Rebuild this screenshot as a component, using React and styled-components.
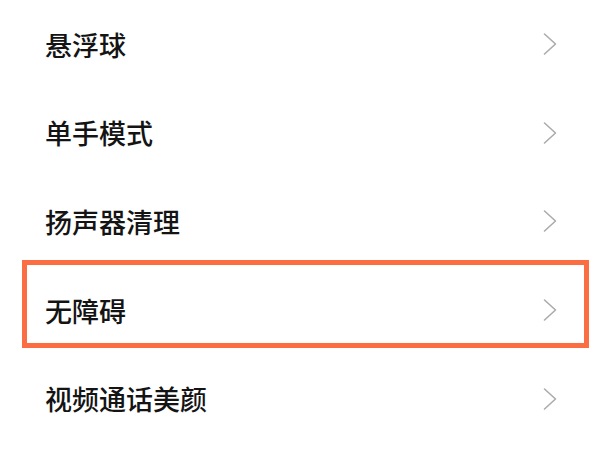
import React from "react";
import styled, { createGlobalStyle } from "styled-components";

const Global = createGlobalStyle`
  html, body { margin: 0; padding: 0; background: #ffffff; }
  body { width: 600px; height: 450px; overflow: hidden; }
`;

const List = styled.div`
  display: flex;
  flex-direction: column;
  width: 600px;
  height: 450px;
  background: #ffffff;
  font-family: "Noto Sans CJK SC", "Noto Sans", sans-serif;
`;

const Row = styled.div`
  position: relative;
  flex: 0 0 88.6px;
  display: flex;
  align-items: center;
  justify-content: space-between;
  padding: 0 43px 0 45px;
  box-sizing: border-box;
`;

const Label = styled.span`
  font-size: 27px;
  font-weight: 500;
  color: #141414;
  line-height: 1;
  letter-spacing: 0;
`;

const Highlight = styled.div`
  position: absolute;
  left: 22px;
  right: 11px;
  top: -6px;
  height: 88px;
  box-sizing: border-box;
  border: 5px solid #fb6d42;
  pointer-events: none;
`;

const Chevron = () => (
  <svg width="14" height="24" viewBox="0 0 14 24" fill="none">
    <polyline
      points="1.5,2 12.5,12 1.5,22"
      stroke="#ababab"
      strokeWidth="1.6"
      strokeLinecap="round"
      strokeLinejoin="round"
    />
  </svg>
);

const items = [
  { label: "悬浮球" },
  { label: "单手模式" },
  { label: "扬声器清理" },
  { label: "无障碍", highlighted: true },
  { label: "视频通话美颜" },
];

export default function App() {
  return (
    <>
      <Global />
      <List>
        {items.map((it) => (
          <Row key={it.label}>
            <Label>{it.label}</Label>
            <Chevron />
            {it.highlighted && <Highlight />}
          </Row>
        ))}
      </List>
    </>
  );
}
